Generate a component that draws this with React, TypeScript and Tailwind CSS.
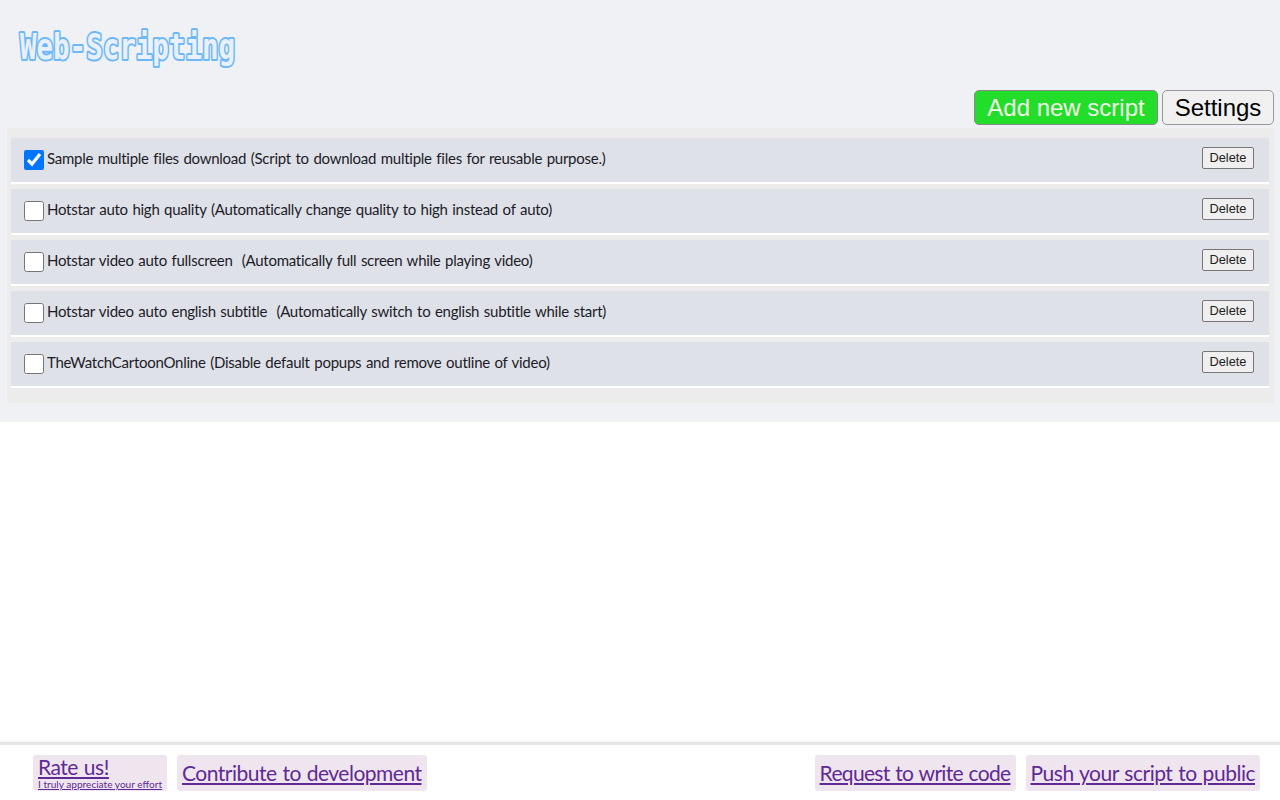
const scripts = [
  { name: "Sample multiple files download", desc: "(Script to download multiple files for reusable purpose.)", checked: true },
  { name: "Hotstar auto high quality", desc: "(Automatically change quality to high instead of auto)", checked: false },
  { name: "Hotstar video auto fullscreen ", desc: "(Automatically full screen while playing video)", checked: false },
  { name: "Hotstar video auto english subtitle ", desc: "(Automatically switch to english subtitle while start)", checked: false },
  { name: "TheWatchCartoonOnline", desc: "(Disable default popups and remove outline of video)", checked: false },
];

const ui = 'Lato, "Noto Sans", sans-serif';

function FooterLink({ children, tracking }: { children: string; tracking: string }) {
  return (
    <a href="#" className={`flex h-[36px] items-center rounded-[3px] bg-[#efe5ef] px-[5px] text-[21px] leading-[26px] text-[#5f2a96] underline [word-spacing:1px] ${tracking}`} style={{ fontFamily: ui }}>
      {children}
    </a>
  );
}

export default function App() {
  return (
    <div className="relative flex h-[800px] w-[1280px] flex-col overflow-hidden bg-white" style={{ fontFamily: ui }}>
      <div className="h-[422px] bg-[#f0f1f4] pl-[7px] pr-[6px]">
        <div className="flex h-[90px] items-start pl-[11px] pt-[24px]">
          <svg width="260" height="52" viewBox="0 0 260 52" className="block">
            <text x="2" y="35" textLength="215" lengthAdjust="spacingAndGlyphs" fontFamily="'DejaVu Sans Mono', monospace" fontWeight="700" fontSize="36" fill="#eaf0f9" stroke="#6db8f7" strokeWidth="4" strokeLinejoin="round" paintOrder="stroke fill">
              Web-Scripting
            </text>
          </svg>
        </div>
        <div className="flex h-[38px] justify-end gap-[4px]" style={{ fontFamily: '"Liberation Sans", sans-serif' }}>
          <button className="h-[35px] w-[184px] rounded-[5px] border border-[#8a8a8a] bg-[#22dd2a] text-[24px] leading-none text-[#f4f4e8]">Add new script</button>
          <button className="h-[35px] w-[112px] rounded-[5px] border border-[#999999] bg-[#f0f0f0] text-[24px] leading-none text-black">Settings</button>
        </div>
        <div className="flex h-[275px] flex-col gap-[5px] bg-[#ececec] pl-[4px] pr-[5px] pt-[10px]">
          {scripts.map((s) => (
            <div key={s.name} className="flex h-[46px] items-start border-b-2 border-white bg-[#dfe1e9] pl-[13px] pr-[15px]">
              <div className="mt-[12px] h-[20px] w-[20px] shrink-0">
                <input type="checkbox" defaultChecked={s.checked} className="m-0 block h-[20px] w-[20px]" />
              </div>
              <span className="ml-[3px] mt-[9px] whitespace-pre text-[15px] leading-[22px] tracking-[-0.26px] text-[#1c1c28] [word-spacing:1px]">
                {s.name} {s.desc}
              </span>
              <button className="ml-auto mt-[9px] h-[22px] w-[52px] rounded-[2px] border border-[#777777] bg-[#efefef] text-[12.8px] leading-none text-[#222222]" style={{ fontFamily: '"Liberation Sans", sans-serif' }}>
                Delete
              </button>
            </div>
          ))}
        </div>
      </div>
      <div className="mt-auto flex h-[58px] items-start justify-between border-t-[3px] border-[#e6e6e6] pl-[33px] pr-[20px] pt-[10px] shadow-[0_-1px_2px_rgba(0,0,0,0.05)]">
        <div className="flex gap-[10px]">
          <a href="#" className="flex h-[36px] w-[134px] flex-col rounded-[3px] bg-[#efe5ef] px-[5px] text-[#5f2a96] underline">
            <span className="text-[21px] leading-[24px] tracking-[-0.48px] [word-spacing:1px]">Rate us!</span>
            <span className="whitespace-nowrap text-[10.1px] leading-[11px]">I truly appreciate your effort</span>
          </a>
          <FooterLink tracking="tracking-[-0.5px]">Contribute to development</FooterLink>
        </div>
        <div className="flex gap-[10px]">
          <FooterLink tracking="tracking-[-0.68px]">Request to write code</FooterLink>
          <FooterLink tracking="tracking-[-0.48px]">Push your script to public</FooterLink>
        </div>
      </div>
    </div>
  );
}
